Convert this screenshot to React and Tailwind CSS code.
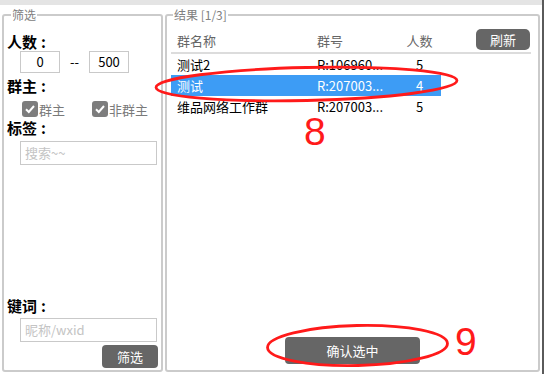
import React from "react";

const FONT = '"Noto Sans CJK SC", "Noto Sans", "Liberation Sans", sans-serif';

function Check({ label, className = "" }) {
  return (
    <div className={"flex items-center " + className}>
      <div className="w-[16px] h-[16px] rounded-[3px] bg-[#7d7d7d] flex items-center justify-center">
        <svg width="12" height="12" viewBox="0 0 12 12">
          <path d="M2 6.2 L4.8 9 L10 3" fill="none" stroke="white" strokeWidth="2" />
        </svg>
      </div>
      <span className="text-[13px] text-[#7a7a7a] leading-none ml-[1px]">{label}</span>
    </div>
  );
}

function Label({ children, className = "" }) {
  return (
    <div className={"text-[15px] font-bold leading-[22px] text-black " + className}>
      {children}
      <span className="ml-[4px]">:</span>
    </div>
  );
}

const rows = [
  { name: "测试2", id: "R:106960...", n: "5" },
  { name: "测试", id: "R:207003...", n: "4", sel: true },
  { name: "维品网络工作群", id: "R:207003...", n: "5" },
];

export default function App() {
  return (
    <div
      className="relative w-[544px] h-[374px] bg-white overflow-hidden"
      style={{ fontFamily: FONT }}
    >
      <div className="h-[5px] bg-[#e4e4e4]" />
      <div className="flex h-[369px]">
        {/* left panel */}
        <div className="relative ml-[2px] mt-[9px] mb-[2px] w-[161px] border-2 border-[#cbcbcb] rounded-[3px] flex flex-col pl-[3px] pr-[4px]">
          <span className="absolute left-[7px] top-[-10px] bg-white px-[1px] text-[12px] leading-[18px] text-[#808080]">
            筛选
          </span>
          <Label className="mt-[15px]">人数</Label>
          <div className="flex items-center mt-[-2px] ml-[13px]">
            <div className="w-[40px] h-[22px] border border-[#c9c9c9] flex items-center justify-center text-[13px]">0</div>
            <span className="w-[29px] text-center text-[13px]">--</span>
            <div className="w-[40px] h-[22px] border border-[#c9c9c9] flex items-center justify-center text-[13px]">500</div>
          </div>
          <Label className="mt-[2px]">群主</Label>
          <div className="flex items-center mt-[3px] ml-[15px] h-[18px]">
            <Check label="群主" className="w-[70px]" />
            <Check label="非群主" />
          </div>
          <Label className="mt-[-1px]">标签</Label>
          <div className="mt-[2px] ml-[13px] h-[24px] border border-[#c9c9c9] flex items-center pl-[4px] text-[13px] text-[#c4c4c4]">
            搜索~~
          </div>
          <div className="flex-1" />
          <Label>键词</Label>
          <div className="mt-[1px] ml-[13px] h-[24px] border border-[#c9c9c9] flex items-center pl-[4px] text-[13px] text-[#c4c4c4]">
            昵称/wxid
          </div>
          <div className="flex justify-end mt-[3px] mb-[2px]">
            <button className="w-[56px] h-[23px] rounded-[4px] bg-[#666666] text-white text-[13px] leading-none mr-[-1px]">
              筛选
            </button>
          </div>
        </div>

        {/* right panel */}
        <div className="relative ml-[2px] mt-[9px] mb-[2px] w-[375px] border-2 border-[#cbcbcb] rounded-[3px] flex flex-col px-[4px]">
          <span className="absolute left-[6px] top-[-10px] bg-white px-[1px] text-[12px] leading-[18px] text-[#808080]">
            结果 [1/3]
          </span>
          <div className="flex items-center h-[22px] mt-[14px] text-[13px] text-[#666]">
            <span className="w-[140px] shrink-0 pl-[6px]">群名称</span>
            <span className="w-[87px] shrink-0 pl-[6px]">群号</span>
            <span className="w-[43px] shrink-0 text-center">人数</span>
            <div className="flex-1 flex justify-end pr-[4px]">
              <button className="w-[54px] h-[21px] rounded-[5px] bg-[#666666] text-white text-[13px] leading-none mt-[-3px]">
                刷新
              </button>
            </div>
          </div>
          <div className="h-[2px] bg-[#dcdcdc] w-[360px]" />
          <div className="flex flex-col">
            {rows.map((r) => (
              <div
                key={r.name}
                className={
                  "flex items-center h-[21px] w-[270px] text-[13px] " +
                  (r.sel ? "bg-[#3d9cf5] text-white" : "text-black")
                }
              >
                <span className="w-[140px] shrink-0 pl-[6px] whitespace-nowrap">{r.name}</span>
                <span className="w-[87px] shrink-0 pl-[6px] whitespace-nowrap">{r.id}</span>
                <span className="w-[43px] shrink-0 text-center">{r.n}</span>
              </div>
            ))}
          </div>
          <div className="flex-1" />
          <div className="flex justify-center mb-[6px]">
            <button className="w-[135px] h-[27px] rounded-[4px] bg-[#666666] text-white text-[13px] leading-none">
              确认选中
            </button>
          </div>
        </div>

        {/* right edge */}
        <div className="ml-[2px] w-[2px] bg-[#5a5a5a]" style={{ marginTop: "-5px" }} />
      </div>

      {/* annotations */}
      <svg className="absolute inset-0 pointer-events-none" width="544" height="374">
        <ellipse
          cx="306.5"
          cy="84"
          rx="150.5"
          ry="16.5"
          transform="rotate(-1.3 306.5 84)"
          fill="none"
          stroke="#ff1a1a"
          strokeWidth="2.8"
        />
        <ellipse
          cx="357.5"
          cy="345.5"
          rx="90"
          ry="20"
          transform="rotate(-1.3 357.5 345.5)"
          fill="none"
          stroke="#ff1a1a"
          strokeWidth="2.8"
        />
      </svg>
      <span
        className="absolute left-[304px] top-[110px] text-[39px] leading-[44px] text-[#ff1a1a]"
        style={{ fontFamily: '"Liberation Sans", sans-serif' }}
      >
        8
      </span>
      <span
        className="absolute left-[455px] top-[320px] text-[39px] leading-[44px] text-[#ff1a1a]"
        style={{ fontFamily: '"Liberation Sans", sans-serif' }}
      >
        9
      </span>
    </div>
  );
}
